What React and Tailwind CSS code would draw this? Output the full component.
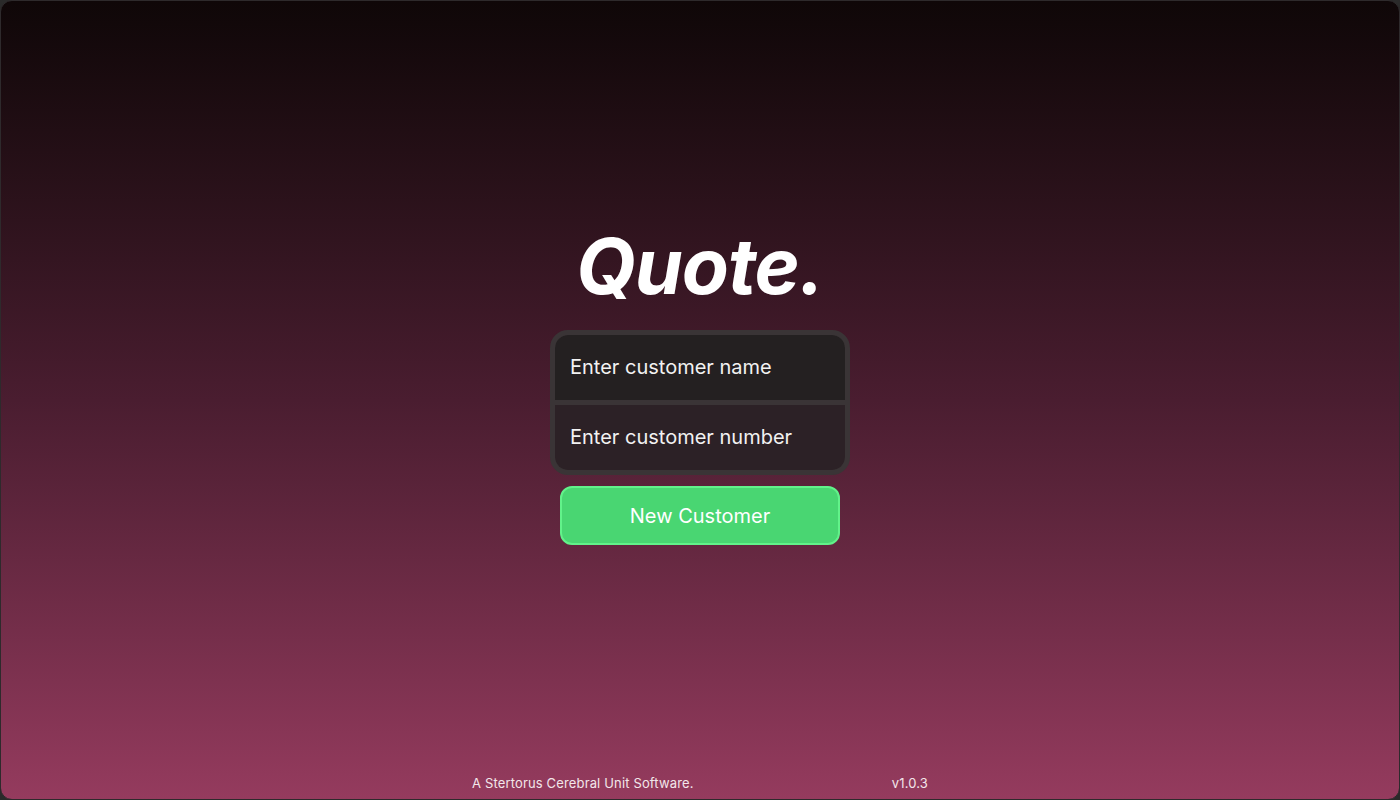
export default function App() {
  return (
    <div className="h-[800px] w-[1400px] bg-[#2a2a2a]" style={{ fontFamily: 'Inter, "Noto Sans", sans-serif' }}>
      <div className="flex h-full w-full flex-col items-center overflow-hidden rounded-[12px] border border-[#2e2a2c] bg-gradient-to-b from-[#0f0708] via-[#4a1d30] to-[#953b5e]">
        <div className="flex flex-1 flex-col items-center pt-[227px]">
          <h1 className="text-[77px] font-bold italic leading-none tracking-[-1px] text-white">Quote.</h1>

          <div className="mt-[25px] w-[300px] overflow-hidden rounded-[18px] border-[5px] border-[#3a3436] bg-[#3a3436]">
            <input
              placeholder="Enter customer name"
              className="block h-[65px] w-full rounded-t-[13px] bg-[#242021] px-[15px] pb-[1px] text-[20px] text-[#f5f5f5] outline-none placeholder:text-[#f2f2f2]"
            />
            <input
              placeholder="Enter customer number"
              className="mt-[5px] block h-[65px] w-full rounded-b-[13px] bg-[#2c2126] px-[15px] pb-[1px] text-[20px] text-[#f5f5f5] outline-none placeholder:text-[#f2f2f2]"
            />
          </div>

          <button className="mt-[11px] h-[59px] w-[280px] rounded-[12px] border-2 border-[#62f28a] bg-[#49d672] text-[20px] text-white">
            New Customer
          </button>
        </div>

        <footer className="flex w-[456px] justify-between pb-[6px] text-[13px] tracking-[0.15px] text-[#f2e6ea]">
          <span>A Stertorus Cerebral Unit Software.</span>
          <span>v1.0.3</span>
        </footer>
      </div>
    </div>
  );
}
